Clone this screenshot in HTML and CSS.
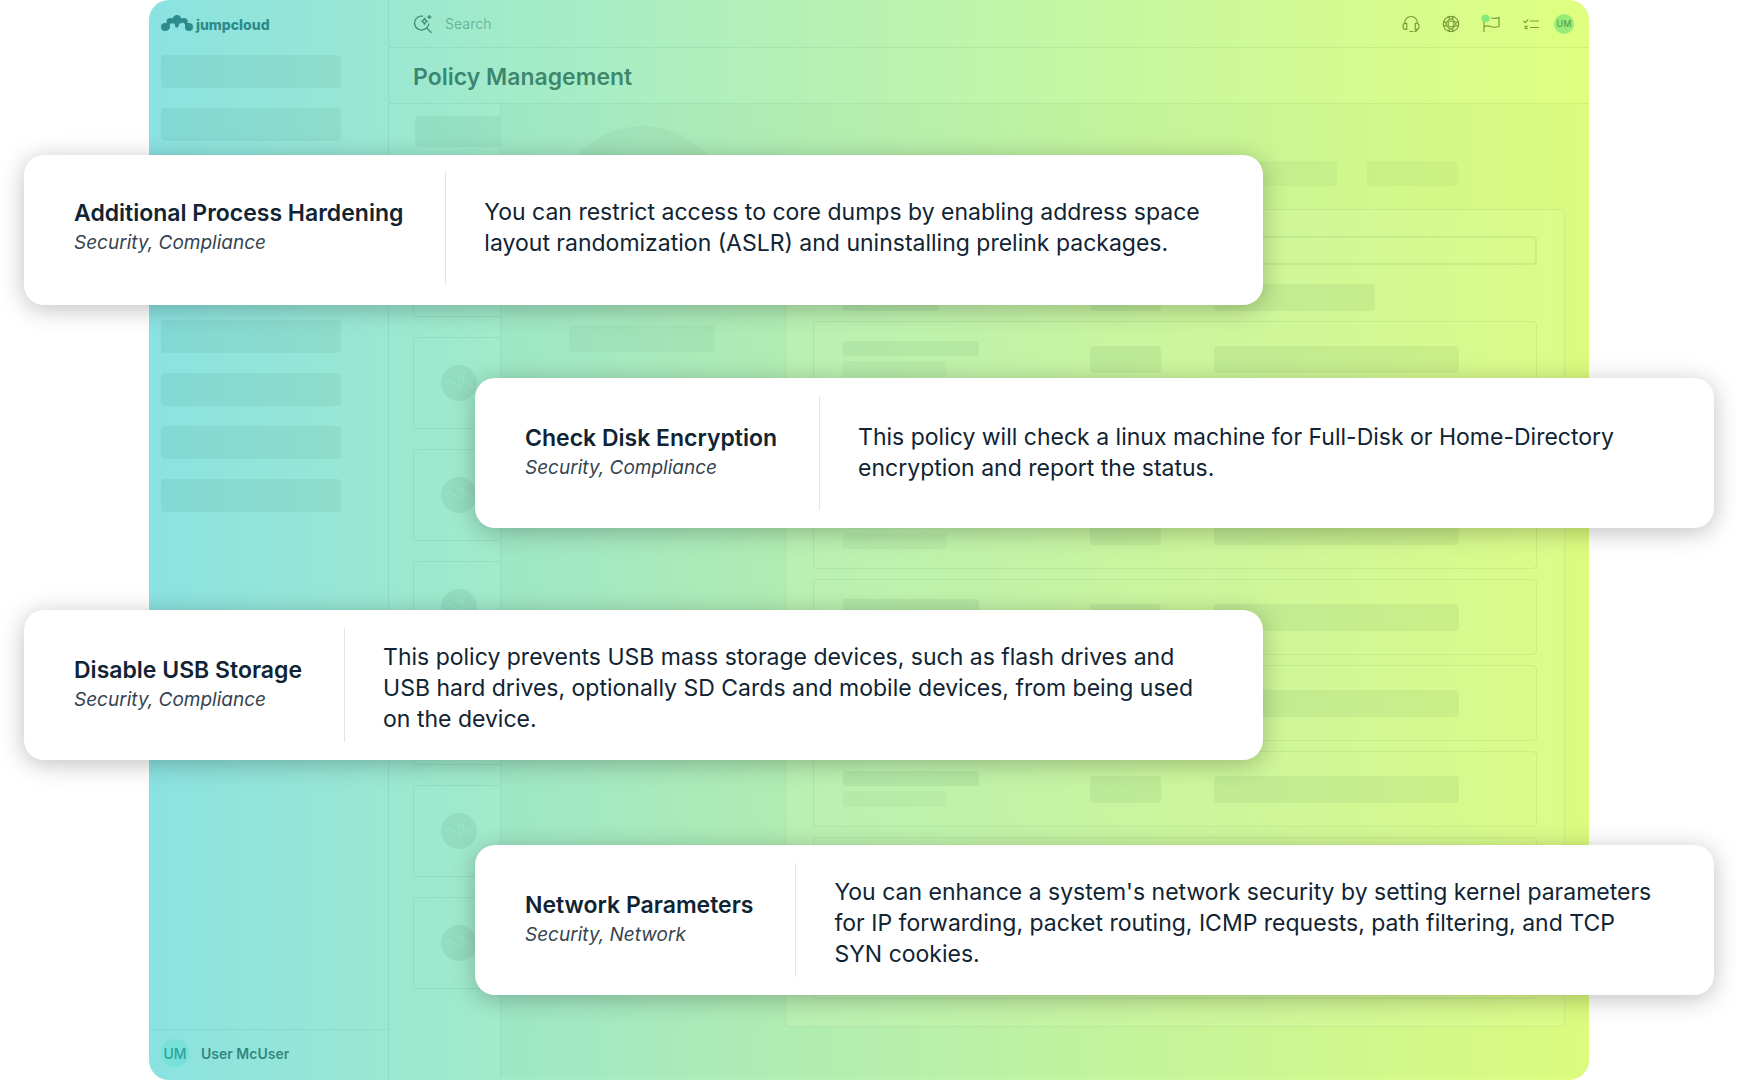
FILE: index.html
```html
<!DOCTYPE html>
<html lang="en">
<head>
<meta charset="utf-8">
<title>Policy Management</title>
<meta name="viewport" content="width=device-width, initial-scale=1">
<link rel="stylesheet" href="styles.css">
</head>
<body>
<svg class="defs" aria-hidden="true">
  <symbol id="photo" viewBox="0 0 36 36">
    <circle class="photo-disc" cx="18" cy="18" r="18"/>
    <g class="photo-lines">
      <path d="M1 20 8 14.500 22 23.500M18.500 21 25 16.500 35 22.500"/>
      <circle cx="20" cy="13" r="2.500"/>
    </g>
  </symbol>
</svg>
<div class="stage">
  <div class="app">
    <aside class="sidebar">
      <a class="brand" href="#">
        <svg width="32" height="18" viewBox="0 0 32 18" aria-hidden="true">
          <mask id="figures">
            <rect width="32" height="18" fill="#fff"/>
            <g fill="#000"><circle cx="11" cy="10.500" r="2.300"/><circle cx="21.500" cy="10.200" r="2.500"/></g>
          </mask>
          <g mask="url(#figures)">
            <circle cx="4" cy="12" r="4"/><circle cx="28" cy="12" r="4"/>
            <circle cx="9.500" cy="7" r="4"/><circle cx="16" cy="4.600" r="4.500"/><circle cx="22.800" cy="7" r="4"/>
            <path d="M4 8 9 8V13L7 15ZM28 8 23 8 24.500 13 26 15ZM13.500 8H18.500L17 12.500H14.500Z"/>
          </g>
        </svg>
        <span>jumpcloud</span>
      </a>
      <div class="nav">
        <i></i><i></i><i></i><i></i><i></i><i></i><i></i><i></i><i></i>
      </div>
      <div class="account"><span class="avatar">UM</span><span>User McUser</span></div>
    </aside>
    <main class="main">
      <header class="topbar">
        <label class="search">
          <svg width="20" height="20" viewBox="0 0 20 20" aria-hidden="true"><path d="M10 2.200A7 7 0 1 0 14.600 12.600M16 9.500A7 7 0 0 1 13.600 14L18.500 18.800M11.500 3.800Q12 7 14.600 7.300 12 7.700 11.500 10.600 11 7.700 8.400 7.300 11 7 11.500 3.800ZM16.400 1V5M14.400 3H18.400"/></svg>
          <input type="search" placeholder="Search" aria-label="Search">
        </label>
        <div class="tools">
          <button type="button" aria-label="Support"><svg viewBox="0 0 18 18"><path d="M2.500 9V8A6.500 6.500 0 0 1 15.500 8V9M3.300 8.300C1.800 8.300 1 9.300 1 11.300S1.800 14.300 3.300 14.300H4.700V8.300ZM14.700 8.300C16.200 8.300 17 9.300 17 11.300S16.200 14.300 14.700 14.300H13.300V8.300ZM15.300 14.300Q14.800 16.500 12 16.500M7.500 16.500H11"/></svg></button>
          <button type="button" aria-label="Help"><svg viewBox="0 0 18 18"><circle cx="9" cy="9" r="7.700"/><circle cx="9" cy="9" r="3"/><path d="M7 1.600 7.600 4.200H10.400L11 1.600M7 16.400 7.600 13.800H10.400L11 16.400M1.600 7 4.200 7.600V10.400L1.600 11M16.400 7 13.800 7.600V10.400L16.400 11M4.200 7.600 7.600 4.200M10.400 4.200 13.800 7.600M4.200 10.400 7.600 13.800M10.400 13.800 13.800 10.400"/></svg></button>
          <button type="button" aria-label="Updates"><svg viewBox="0 0 18 18"><path d="M2 8V17M2 12Q5 10 8.500 11.500T17 11.500V2.500Q13 4 9 2.800M2 6V12"/><circle class="dot" cx="3.500" cy="3.500" r="4"/></svg></button>
          <button type="button" aria-label="Tasks"><svg viewBox="0 0 18 18"><path d="M1.500 6 3.200 7.600 6.300 4.300M2.500 10.800 5.700 14M5.700 10.800 2.500 14M8 6H17M8 12.500H17"/></svg></button>
          <span class="avatar avatar-small">UM</span>
        </div>
      </header>
      <div class="heading"><h1>Policy Management</h1></div>
      <div class="content">
        <div class="list">
          <div class="list-filter"></div>
          <div class="tile"><svg><use href="#photo"/></svg></div>
          <div class="tile"><svg><use href="#photo"/></svg></div>
          <div class="tile"><svg><use href="#photo"/></svg></div>
          <div class="tile"><svg><use href="#photo"/></svg></div>
          <div class="tile"><svg><use href="#photo"/></svg></div>
          <div class="tile"><svg><use href="#photo"/></svg></div>
          <div class="tile"><svg><use href="#photo"/></svg></div>
        </div>
        <div class="profile"><div class="portrait"></div><div class="caption"></div></div>
        <div class="details">
          <div class="tabs"><i></i><i></i></div>
          <div class="panel">
            <div class="field"></div>
            <div class="row row-head"><div><i></i></div><i></i><i></i></div>
            <div class="row"><div><i></i><i></i></div><i></i><i></i></div>
            <div class="row"><div><i></i><i></i></div><i></i><i></i></div>
            <div class="row"><div><i></i><i></i></div><i></i><i></i></div>
            <div class="row"><div><i></i><i></i></div><i></i><i></i></div>
            <div class="row"><div><i></i><i></i></div><i></i><i></i></div>
            <div class="row"><div><i></i><i></i></div><i></i><i></i></div>
            <div class="row"><div><i></i><i></i></div><i></i><i></i></div>
            <div class="row"><div><i></i><i></i></div><i></i><i></i></div>
          </div>
        </div>
      </div>
    </main>
  </div>
  <div class="cards">
    <article class="card">
      <div class="policy"><h2>Additional Process Hardening</h2><p>Security, Compliance</p></div>
      <p class="about">You can restrict access to core dumps by enabling address space layout randomization (ASLR) and uninstalling prelink packages.</p>
    </article>
    <article class="card card-right">
      <div class="policy"><h2>Check Disk Encryption</h2><p>Security, Compliance</p></div>
      <p class="about">This policy will check a linux machine for Full-Disk or Home-Directory encryption and report the status.</p>
    </article>
    <article class="card">
      <div class="policy"><h2>Disable USB Storage</h2><p>Security, Compliance</p></div>
      <p class="about about-long">This policy prevents USB mass storage devices, such as flash drives and USB hard drives, optionally SD Cards and mobile devices, from being used on the device.</p>
    </article>
    <article class="card card-right">
      <div class="policy"><h2>Network Parameters</h2><p>Security, Network</p></div>
      <p class="about about-long">You can enhance a system's network security by setting kernel parameters for IP forwarding, packet routing, ICMP requests, path filtering, and TCP SYN cookies.</p>
    </article>
  </div>
</div>
</body>
</html>
```
FILE: styles.css
```css
:root {
  --line: rgba(0, 70, 50, .07);
  --block: rgba(0, 60, 40, .06);
  --block-soft: rgba(0, 60, 40, .035);
  --ink: #102433;
}

* { box-sizing: border-box; }

body {
  margin: 0;
  background: #fff;
  color: var(--ink);
  font-family: Inter, "Liberation Sans", sans-serif;
}

h1, h2, p { margin: 0; }
i { display: block; }
.defs { position: absolute; width: 0; height: 0; }

.stage { display: grid; min-height: 100vh; }
.app, .cards { grid-area: 1 / 1; min-width: 0; }

/* Application window */
.app {
  display: flex;
  margin: 0 149px;
  overflow: hidden;
  border-radius: 20px;
  background: linear-gradient(90deg, #8ae2e1 0%, #9be8d1 17%, #b2f0b9 42%, #cbf89b 72%, #e0ff80 100%);
}

.sidebar {
  display: flex;
  flex: 0 0 240px;
  flex-direction: column;
  border-right: 1px solid var(--line);
}

.brand {
  display: flex;
  align-items: center;
  gap: 3px;
  height: 48px;
  padding-left: 12px;
  color: #2d8b8c;
  font-size: 14px;
  font-weight: 800;
  text-decoration: none;
}
.brand svg { fill: currentColor; }

.nav {
  display: flex;
  flex: 1;
  flex-direction: column;
  gap: 20px;
  padding: 7px 47px 0 12px;
}
.nav i { height: 33px; border-radius: 4px; background: var(--block); }

.account {
  display: flex;
  align-items: center;
  gap: 12px;
  height: 51px;
  padding: 0 12px 4px;
  border-top: 1px solid var(--line);
  color: rgba(0, 85, 80, .68);
  font-size: 14px;
  font-weight: 600;
}

.avatar {
  display: grid;
  place-items: center;
  width: 28px;
  height: 28px;
  border-radius: 50%;
  background: #78e1da;
  color: #2fa39c;
  font-size: 14px;
  font-weight: 500;
}
.avatar-small {
  width: 20px;
  height: 20px;
  background: #96ec76;
  color: #5fa045;
  font-size: 9px;
}

.main {
  display: flex;
  flex: 1;
  flex-direction: column;
  min-width: 0;
  padding-bottom: 3px;
}

.topbar {
  display: flex;
  align-items: center;
  justify-content: space-between;
  height: 48px;
  padding: 0 15px 0 24px;
  border-bottom: 1px solid var(--line);
}
.search { display: flex; align-items: center; gap: 12px; }
.search svg { fill: none; stroke: rgba(0, 80, 60, .6); stroke-width: 1.3; }
.search input {
  width: 200px;
  padding: 0;
  border: 0;
  outline: 0;
  background: none;
  color: rgba(0, 80, 60, .6);
  font: 14px/20px Inter, "Liberation Sans", sans-serif;
}
.search input::placeholder { color: rgba(0, 80, 60, .36); opacity: 1; }

.tools { display: flex; align-items: center; gap: 22px; }
.tools button {
  display: block;
  width: 18px;
  height: 18px;
  padding: 0;
  border: 0;
  background: none;
}
.tools button svg {
  display: block;
  width: 18px;
  height: 18px;
  overflow: visible;
  fill: none;
  stroke: rgba(55, 95, 0, .6);
  stroke-width: 1.2;
}
.tools .dot { fill: #86e878; stroke: none; }
.tools .avatar { margin-left: -8px; }

.heading {
  display: flex;
  align-items: center;
  height: 56px;
  padding: 2px 0 0 24px;
  border-bottom: 1px solid var(--line);
}
.heading h1 {
  color: rgba(0, 75, 55, .64);
  font-size: 23px;
  font-weight: 600;
  line-height: 30px;
}

.content { display: flex; flex: 1; }

.list {
  display: flex;
  flex: 0 0 112px;
  flex-direction: column;
  gap: 20px;
  padding: 12px 0 0 24px;
  border-right: 1px solid var(--line);
}
.list-filter {
  height: 31px;
  margin: 0 0 58px 2px;
  border-radius: 4px 0 0 4px;
  background: var(--block);
}
.tile {
  height: 92px;
  padding: 27px 0 0 27px;
  border: 1px solid var(--line);
  border-right: 0;
  border-radius: 4px 0 0 4px;
}
.tile svg { display: block; width: 36px; height: 36px; }
.photo-disc { fill: rgba(0, 60, 40, .07); }
.photo-lines { fill: none; stroke: rgba(160, 240, 210, .6); stroke-width: 1; }

.profile {
  display: flex;
  flex: 0 0 284px;
  flex-direction: column;
  align-items: center;
  gap: 22px;
  padding: 22px 2px 0 0;
  background: rgba(0, 40, 0, .02);
}
.portrait { width: 177px; height: 177px; border-radius: 50%; background: var(--block-soft); }
.caption { width: 146px; height: 27px; border-radius: 4px; background: var(--block-soft); }

.details {
  display: flex;
  flex: 1;
  flex-direction: column;
  gap: 23px;
  min-width: 0;
  padding: 57px 24px 50px 0;
  background: rgba(0, 40, 0, .02);
}
.tabs { display: flex; justify-content: flex-end; gap: 30px; padding-right: 107px; }
.tabs i { width: 91px; height: 25px; border-radius: 4px; background: var(--block-soft); }

.panel {
  display: flex;
  flex: 1;
  flex-direction: column;
  gap: 10px;
  padding: 26px 27px;
  border: 1px solid var(--line);
  border-radius: 4px;
  background: rgba(230, 255, 185, .18);
}
.field { height: 29px; border: 2px solid var(--line); border-radius: 4px; }
.row {
  display: grid;
  grid-template-columns: 247px 124px 1fr;
  align-items: center;
  height: 76px;
  padding: 0 77px 0 29px;
  border: 1px solid var(--line);
  border-radius: 4px;
}
.row div { display: grid; gap: 5px; }
.row i { height: 27px; border-radius: 4px; background: var(--block); }
.row div i { width: 136px; height: 15px; border-radius: 2px; }
.row div i + i { width: 103px; height: 16px; background: var(--block-soft); }
.row > div + i { width: 71px; }
.row-head { align-items: end; height: 36px; border-width: 0 1px; border-color: transparent; }
.row-head div i { width: 95px; height: 27px; }
.row-head > i:last-child { width: 161px; }

/* Policy cards laid over the window */
.cards {
  z-index: 1;
  display: flex;
  flex-direction: column;
  padding: 155px 24px 85px;
}
.card {
  display: flex;
  align-items: center;
  min-height: 150px;
  margin-right: 451px;
  margin-bottom: 73px;
  padding: 18px 48px 18px 50px;
  border-radius: 20px;
  background: #fff;
  box-shadow: 0 4px 24px rgba(0, 0, 0, .25);
}
.card:first-child { padding-top: 16px; padding-bottom: 20px; }
.card-right { margin-right: 0; margin-bottom: 82px; margin-left: 451px; }
.card:nth-child(3) { margin-bottom: 85px; }
.card:last-child { margin-bottom: 0; }

.policy {
  display: flex;
  flex: none;
  flex-direction: column;
  justify-content: center;
  align-self: stretch;
  padding-right: 42px;
  border-right: 1px solid #e2e6e9;
}
.policy h2 { font-size: 23px; font-weight: 600; line-height: 30px; }
.policy p { color: #35444f; font-size: 19px; font-style: italic; line-height: 30px; }

.about { flex: 1; padding-left: 38px; font-size: 23px; line-height: 31px; }
.about-long { padding-top: 6px; }
```
